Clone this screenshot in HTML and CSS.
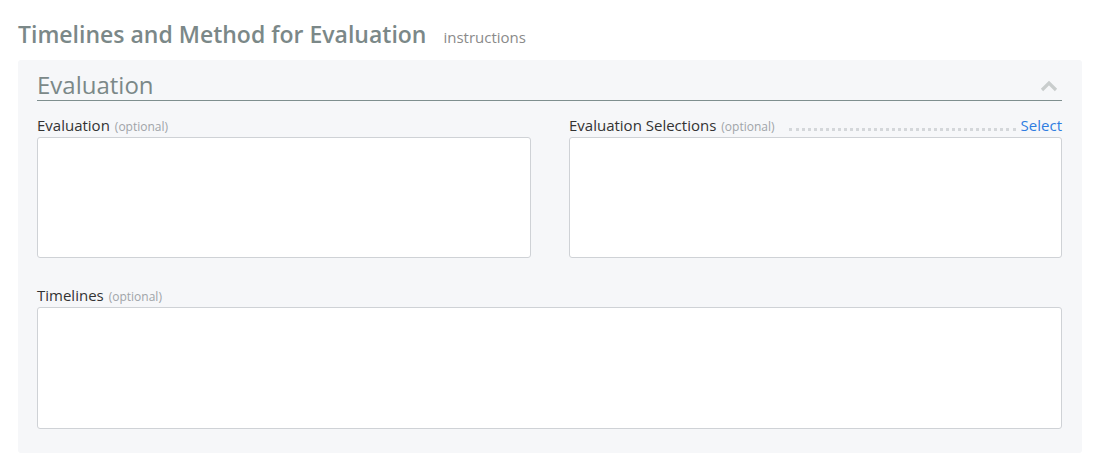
FILE: index.html
```html
<!DOCTYPE html>
<html>
<head>
<meta charset="utf-8">
<link rel="stylesheet" href="styles.css">
</head>
<body>
<div class="page">
  <div class="page-head">
    <h1 class="page-title">Timelines and Method for Evaluation</h1>
    <span class="instructions">instructions</span>
  </div>
  <section class="panel">
    <div class="panel-head">
      <h2 class="panel-title">Evaluation</h2>
      <svg class="chevron" width="18" height="12" viewBox="0 0 18 12"><path d="M2 10 L9 3 L16 10" fill="none" stroke="#c9cdcd" stroke-width="3.2"/></svg>
    </div>
    <div class="row two">
      <div class="field">
        <div class="label"><span class="name">Evaluation</span><span class="opt">(optional)</span></div>
        <div class="box"></div>
      </div>
      <div class="field">
        <div class="label"><span class="name">Evaluation Selections</span><span class="opt">(optional)</span><span class="dots"></span><a class="select">Select</a></div>
        <div class="box"></div>
      </div>
    </div>
    <div class="row">
      <div class="field">
        <div class="label"><span class="name">Timelines</span><span class="opt">(optional)</span></div>
        <div class="box tall"></div>
      </div>
    </div>
  </section>
</div>
</body>
</html>
```
FILE: styles.css
```css
* { box-sizing: border-box; }
html, body { margin: 0; padding: 0; background: #fff; }
body { font-family: "Open Sans", "Liberation Sans", sans-serif; color: #333; }
.page { padding: 17px 14px 0 18px; }
.page-head { display: flex; align-items: baseline; gap: 17px; height: 43px; }
.page-title { margin: 0; font-size: 23px; font-weight: 600; color: #7b8888; line-height: 34px; }
.instructions { font-size: 15px; color: #8a8a8a; }
.panel { background: #f6f7f9; border-radius: 3px; padding: 10px 20px 24px 19px; height: 393px; }
.panel-head { display: flex; align-items: center; justify-content: space-between; border-bottom: 1px solid #7f8f8f; height: 31px; padding-right: 4px; }
.panel-title { margin: 0; font-size: 24px; font-weight: 400; color: #7b8888; line-height: 32px; }
.chevron { display: block; margin-top: 2px; }
.row { margin-top: 14px; }
.row.two { display: grid; grid-template-columns: 494px 493px; gap: 38px; }
.row + .row { margin-top: 27px; }
.field { display: flex; flex-direction: column; }
.label { display: flex; align-items: baseline; height: 22px; line-height: 20px; font-size: 15px; color: #333; white-space: nowrap; }
.opt { font-size: 12px; color: #a0a4a8; margin-left: 5px; }
.dots { flex: 1; margin: 0 5px 0 14px; border-bottom: 3px dotted #d4d7da; height: 3px; align-self: center; margin-top: 6px; }
.select { color: #2f7de1; font-size: 15px; }
.box { background: #fff; border: 1px solid #cfd2d6; border-radius: 3px; height: 121px; }
.box.tall { height: 122px; }
```
